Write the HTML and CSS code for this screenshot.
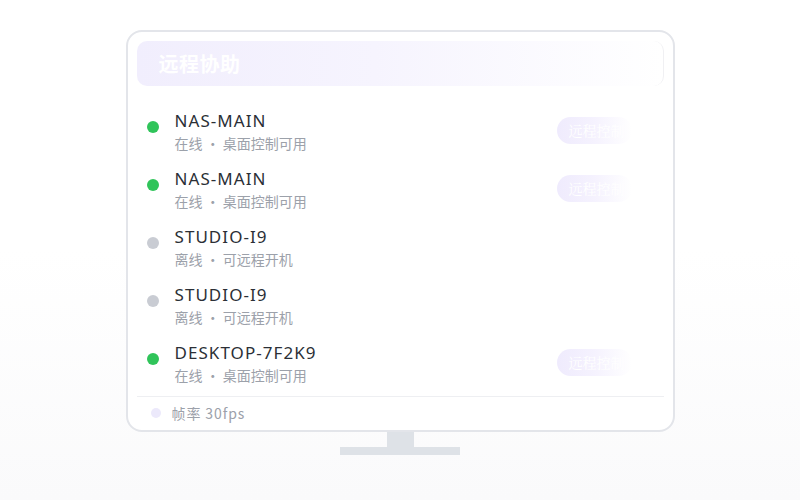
FILE: index.html
```html
<!DOCTYPE html>
<html lang="zh-CN">
    <head>
        <meta charset="UTF-8">
        <meta name="viewport" content="width=device-width, initial-scale=1.0">
        <title>远程协助</title>
        <link rel="stylesheet" href="styles.css">
    </head>
    <body>
        <main class="monitor">
            <section class="screen">
                <header class="screen-header">
                    <h1>远程协助</h1>
                </header>
                <ul class="device-list">
                    <li class="device">
                        <span class="dot dot-online"></span>
                        <div class="device-info">
                            <p class="device-name">NAS-MAIN</p>
                            <p class="device-status">在线 · 桌面控制可用</p>
                        </div>
                        <button class="control-btn">远程控制</button>
                    </li>
                    <li class="device">
                        <span class="dot dot-online"></span>
                        <div class="device-info">
                            <p class="device-name">NAS-MAIN</p>
                            <p class="device-status">在线 · 桌面控制可用</p>
                        </div>
                        <button class="control-btn">远程控制</button>
                    </li>
                    <li class="device">
                        <span class="dot dot-offline"></span>
                        <div class="device-info">
                            <p class="device-name">STUDIO-I9</p>
                            <p class="device-status">离线 · 可远程开机</p>
                        </div>
                    </li>
                    <li class="device">
                        <span class="dot dot-offline"></span>
                        <div class="device-info">
                            <p class="device-name">STUDIO-I9</p>
                            <p class="device-status">离线 · 可远程开机</p>
                        </div>
                    </li>
                    <li class="device">
                        <span class="dot dot-online"></span>
                        <div class="device-info">
                            <p class="device-name">DESKTOP-7F2K9</p>
                            <p class="device-status">在线 · 桌面控制可用</p>
                        </div>
                        <button class="control-btn">远程控制</button>
                    </li>
                </ul>
                <footer class="screen-footer">
                    <span class="footer-dot"></span>
                    <span class="footer-text">帧率 30fps</span>
                </footer>
            </section>
            <div class="stand-neck"></div>
            <div class="stand-base"></div>
        </main>
    </body>
</html>
```

FILE: styles.css
```css
html, body
{
    height: 100%;
}
body
{
    margin: 0;
    background: linear-gradient(180deg, #ffffff 0%, #ffffff 50%, #fafafb 100%);
    font-family: "Noto Sans CJK SC", sans-serif;
}
.monitor
{
    display: flex;
    flex-direction: column;
    align-items: center;
    padding-top: 30px;
}
.screen
{
    box-sizing: border-box;
    width: 549px;
    height: 402px;
    display: flex;
    flex-direction: column;
    padding: 9px 9px 0 9px;
    background-color: #ffffff;
    border: 2px solid #e3e5ea;
    border-radius: 16px;
}
.screen-header
{
    height: 45px;
    display: flex;
    align-items: center;
    padding-left: 22px;
    border-radius: 10px;
    border-right: 1px solid #f0f0f3;
    background: linear-gradient(90deg, #f1eefd 0%, #f6f4fe 45%, #ffffff 100%);
}
.screen-header h1
{
    margin: 0;
    font-size: 20px;
    font-weight: 700;
    color: #ffffff;
    letter-spacing: 0.5px;
}
.device-list
{
    list-style: none;
    margin: 17px 0 0 0;
    padding: 0;
}
.device
{
    box-sizing: border-box;
    height: 58px;
    display: flex;
    align-items: center;
    padding: 0 32px 0 10px;
}
.dot
{
    width: 12px;
    height: 12px;
    border-radius: 50%;
    margin-top: -10px;
    flex-shrink: 0;
}
.dot-online
{
    background-color: #30c45a;
}
.dot-offline
{
    background-color: #c9ccd3;
}
.device-info
{
    margin-left: 16px;
}
.device-info p
{
    margin: 0;
}
.device-name
{
    font-family: "Noto Sans", "Noto Sans CJK SC", sans-serif;
    font-size: 17px;
    line-height: 22px;
    letter-spacing: 1.05px;
    color: #2b2f36;
}
.device-status
{
    font-size: 14px;
    line-height: 22px;
    color: #9ca1aa;
}
.control-btn
{
    margin-left: auto;
    margin-top: -4px;
    width: 75px;
    height: 27px;
    padding: 0 0 0 12px;
    overflow: hidden;
    white-space: nowrap;
    text-align: left;
    border: none;
    border-radius: 14px;
    background: linear-gradient(90deg, #efebfd 0%, #f5f2fe 50%, #ffffff 100%);
    color: #ffffff;
    font-family: "Noto Serif CJK SC", serif;
    font-size: 14px;
}
.screen-footer
{
    margin-top: 3px;
    height: 31px;
    display: flex;
    align-items: center;
    gap: 11px;
    padding-left: 14px;
    border-top: 1px solid #eeeff2;
    font-size: 14px;
    color: #9ca1aa;
}
.footer-text
{
    letter-spacing: 0.9px;
}
.footer-dot
{
    width: 10px;
    height: 10px;
    border-radius: 50%;
    background-color: #ece9fb;
}
.stand-neck
{
    width: 27px;
    height: 15px;
    background-color: #dee2e7;
}
.stand-base
{
    width: 120px;
    height: 8px;
    background-color: #dee2e7;
}
```
